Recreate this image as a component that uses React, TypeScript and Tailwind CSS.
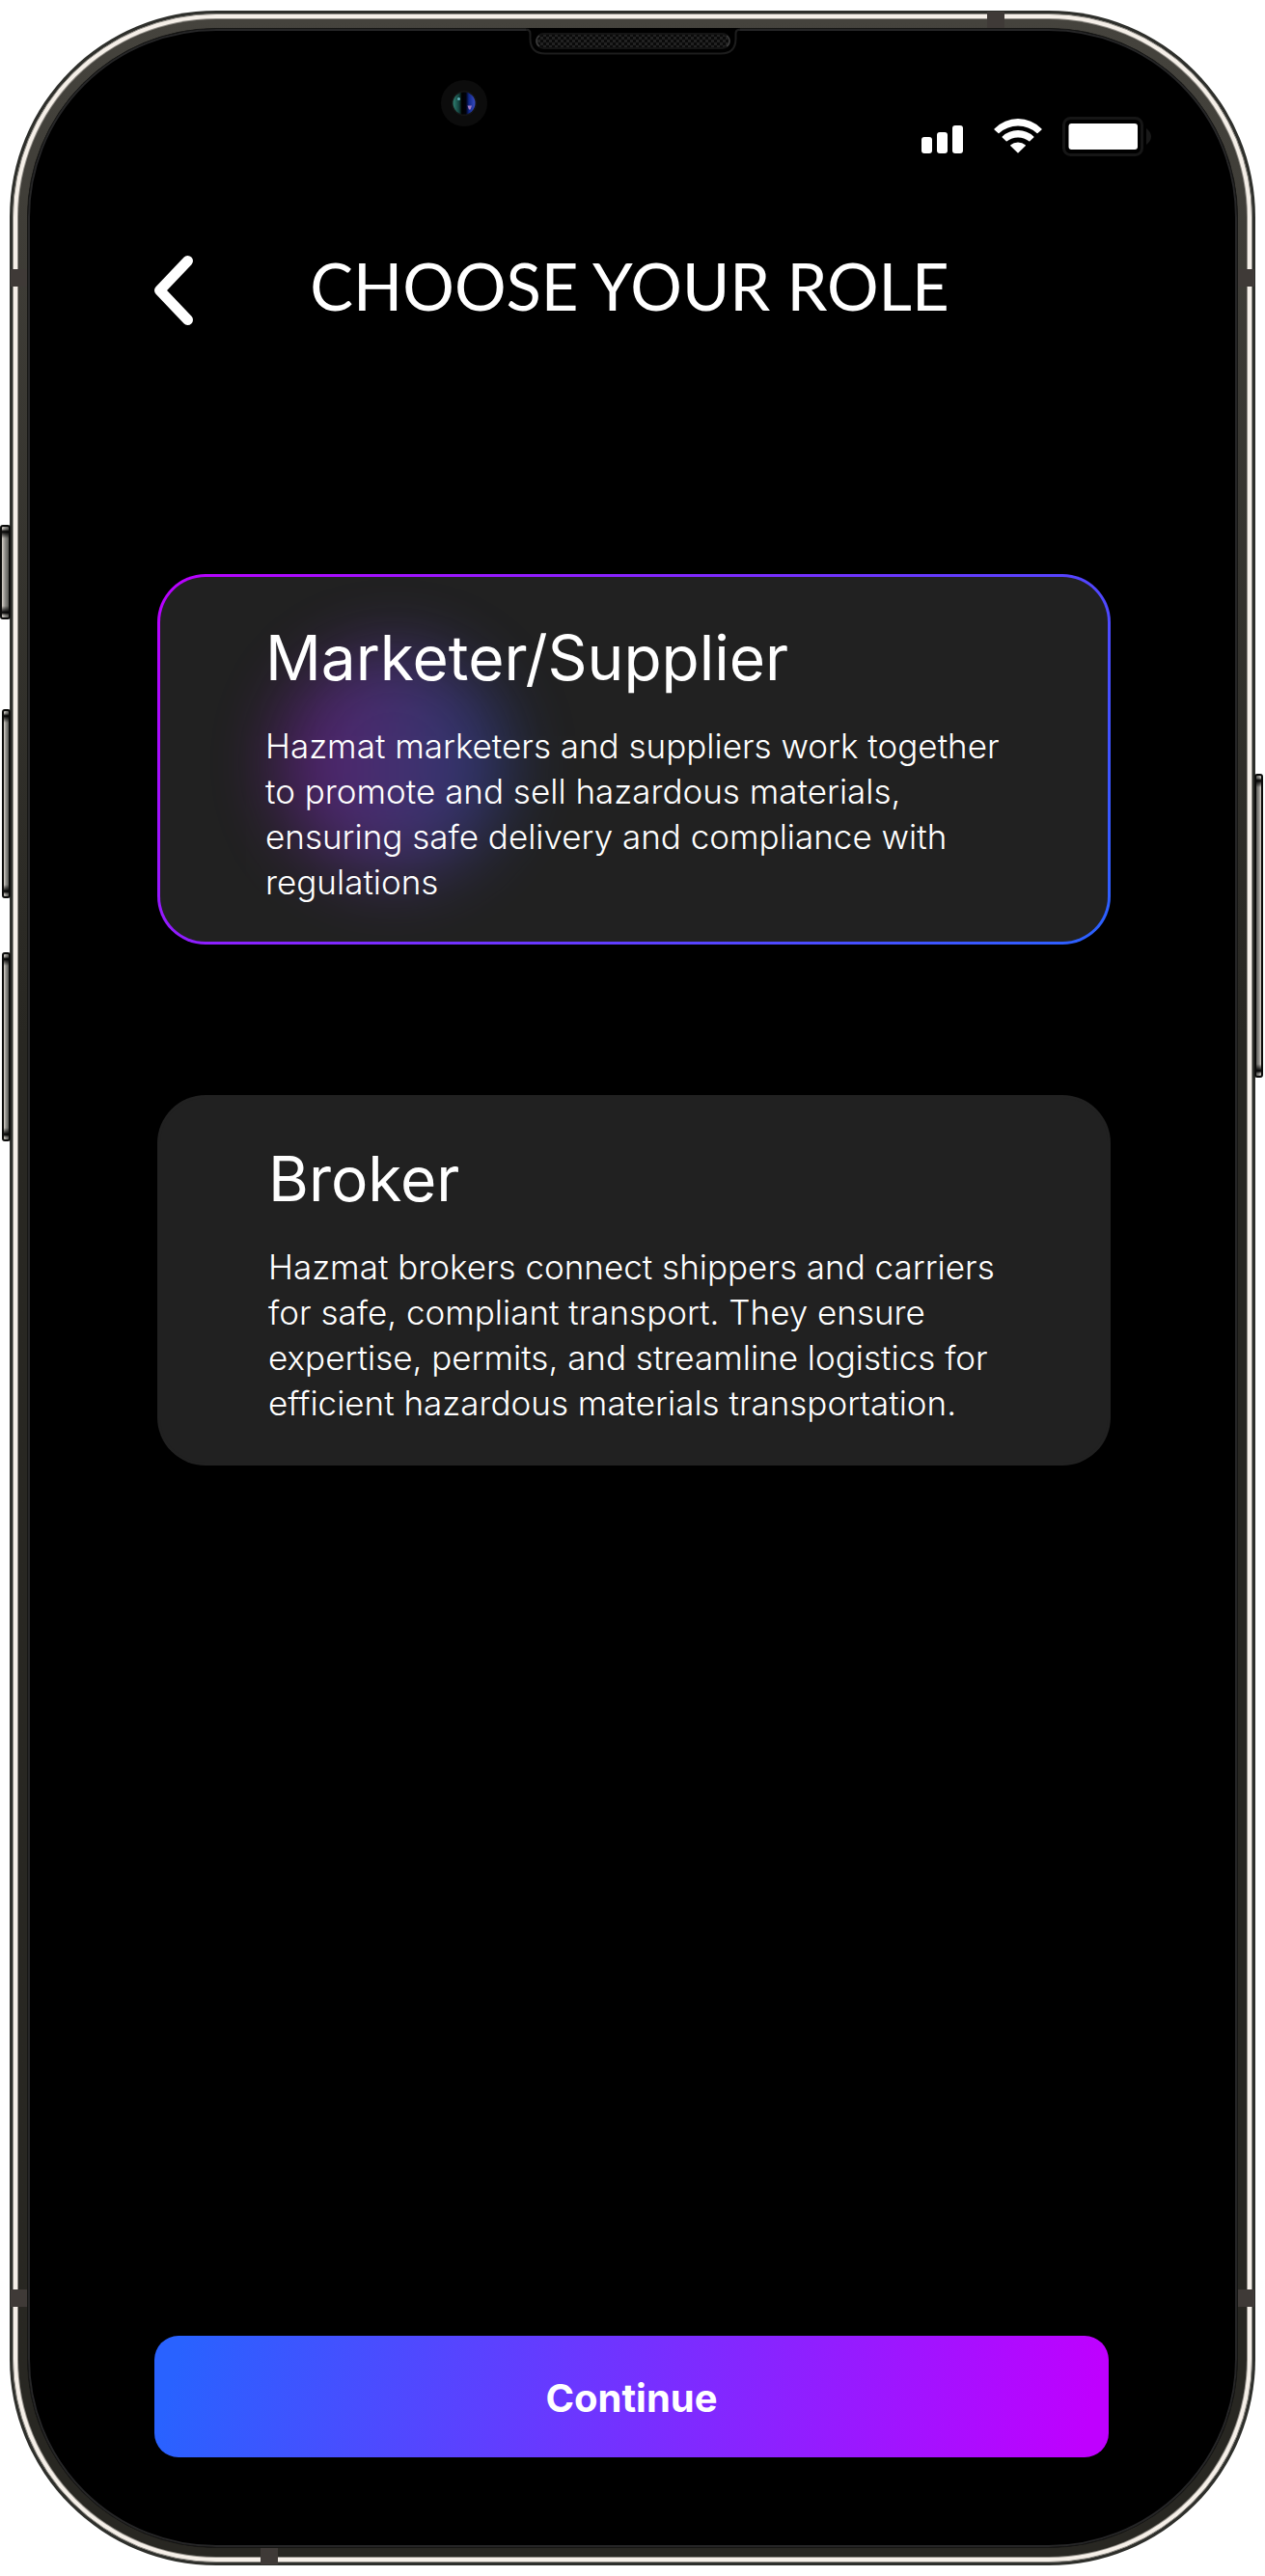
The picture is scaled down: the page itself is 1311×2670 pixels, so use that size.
import { useState } from "react";

type Role = {
  id: string;
  title: string;
  text: string;
  inset: string;
};

const roles: Role[] = [
  {
    id: "marketer",
    title: "Marketer/Supplier",
    text: "Hazmat marketers and suppliers work together to promote and sell hazardous materials, ensuring safe delivery and compliance with regulations",
    inset: "pl-[109px]",
  },
  {
    id: "broker",
    title: "Broker",
    text: "Hazmat brokers connect shippers and carriers for safe, compliant transport. They ensure expertise, permits, and streamline logistics for efficient hazardous materials transportation.",
    inset: "pl-[112px]",
  },
];

function SideButton({ place }: { place: string }) {
  return (
    <span
      aria-hidden="true"
      className={`absolute rounded-[3px] border-2 border-[#0b0b0a] bg-linear-to-r from-[#d6d0c9] via-[#8b8a86] to-[#5b5b57] ${place}`}
    >
      <span className="block h-full w-full bg-[linear-gradient(transparent_2px,#000_5px,transparent_12px,transparent_calc(100%-12px),#000_calc(100%-5px),transparent_calc(100%-2px))]" />
    </span>
  );
}

function AntennaBand({ place }: { place: string }) {
  return <span aria-hidden="true" className={`absolute bg-[#3f3a37] ${place}`} />;
}

function Earpiece() {
  return (
    <svg
      aria-hidden="true"
      viewBox="0 0 222 30"
      className="absolute top-[18px] left-1/2 h-[30px] w-[222px] -translate-x-1/2"
      fill="none"
    >
      <defs>
        <pattern id="mesh" width="6" height="6" patternUnits="userSpaceOnUse">
          <rect width="6" height="6" fill="#0a0a0a" />
          <rect x="0" y="0" width="3" height="3" fill="#222" />
          <rect x="3" y="3" width="3" height="3" fill="#222" />
        </pattern>
      </defs>
      <path
        d="M0 0H222V2Q218 2 218 6V11Q218 27 202 27H20Q4 27 4 11V6Q4 2 0 2Z"
        fill="#000"
      />
      <path
        d="M0 1.500Q4.500 1.500 4.500 6V11Q4.500 26.500 20 26.500H202Q217.500 26.500 217.500 11V6Q217.500 1.500 222 1.500"
        stroke="#1d1d1d"
        strokeWidth="2"
      />
      <rect x="11" y="6" width="200" height="15" rx="7.500" fill="url(#mesh)" stroke="#141414" strokeWidth="2" />
      <path d="M14 8Q11 10 11 13.500T14 19M208 8Q211 10 211 13.500T208 19" stroke="#3c3c3c" strokeWidth="1.500" />
    </svg>
  );
}

function FrontCamera() {
  return (
    <svg
      aria-hidden="true"
      viewBox="0 0 48 48"
      className="absolute top-[72px] left-1/2 h-12 w-12 -translate-x-[199px]"
    >
      <defs>
        <linearGradient id="lens" x1="0" x2="1">
          <stop offset="0" stopColor="#2f7f70" />
          <stop offset="0.280" stopColor="#123f3c" />
          <stop offset="0.400" stopColor="#000" />
          <stop offset="0.580" stopColor="#00020c" />
          <stop offset="0.720" stopColor="#10288a" />
          <stop offset="1" stopColor="#3a4cc0" />
        </linearGradient>
      </defs>
      <circle cx="24" cy="24" r="24" fill="#0c0c0c" />
      <circle cx="24" cy="24" r="13" fill="#151515" />
      <circle cx="24" cy="24" r="11.500" fill="url(#lens)" />
      <circle cx="18.500" cy="19.500" r="1.500" fill="#5fb0b8" />
      <path d="M27.500 26.500h4.500l-1.500 4h-1.500z" fill="#a37cc4" />
    </svg>
  );
}

function StatusBar() {
  return (
    <div className="flex h-[41px] items-start justify-end pr-[87px]">
      <svg role="img" aria-label="Signal" viewBox="0 0 44 41" className="mr-[31px] h-[41px] w-11" fill="#fff">
        <rect x="0" y="21" width="11" height="17" rx="3" />
        <rect x="16" y="16" width="11" height="22" rx="3" />
        <rect x="32" y="9" width="11" height="29" rx="3" />
      </svg>
      <svg role="img" aria-label="Wi-Fi" viewBox="0 0 50 41" className="mr-[21px] h-[41px] w-[50px]" fill="#fff">
        <path d="M0.500 12.500Q11 2 25 2T49.500 12.500Q50 13 49.500 13.500L45.500 17Q45 17.500 44.500 17Q36 9.500 25 9.500T5.500 17Q5 17.500 4.500 17L0.500 13.500Q0 13 0.500 12.500Z" />
        <path d="M8.700 20.500Q15.500 14 25 14T41.300 20.500Q41.800 21 41.300 21.500L37.300 25.300Q36.800 25.800 36.300 25.300Q31.500 21.500 25 21.500T13.700 25.300Q13.200 25.800 12.700 25.300L8.700 21.500Q8.200 21 8.700 20.500Z" />
        <path d="M17.300 29.300Q20.500 26.500 25 26.500T32.700 29.300Q33.200 29.800 32.700 30.300L25.500 37.300Q25 37.800 24.500 37.300L17.300 30.300Q16.800 29.800 17.300 29.300Z" />
      </svg>
      <svg role="img" aria-label="Battery full" viewBox="0 0 92 41" className="h-[41px] w-[92px]">
        <rect x="1.500" y="1.500" width="81" height="38" rx="7" fill="none" stroke="#161616" strokeWidth="3" />
        <rect x="6.500" y="7" width="71.500" height="27" rx="3" fill="#fff" />
        <path d="M87 12Q92 16 92 20.500T87 29Z" fill="#191919" />
      </svg>
    </div>
  );
}

function RoleCard({ role, checked, onPick }: { role: Role; checked: boolean; onPick: () => void }) {
  return (
    <label
      className={`relative block cursor-pointer rounded-[50px] p-[3px] ${
        checked ? "bg-[linear-gradient(135deg,#bb00ff,#2962ff)]" : "bg-[#212121]"
      }`}
    >
      <input
        type="radio"
        name="role"
        value={role.id}
        checked={checked}
        onChange={onPick}
        className="absolute size-px appearance-none opacity-0"
      />
      <span
        className={`relative block overflow-hidden rounded-[47px] bg-[#212121] pt-[46px] pr-[88px] pb-[38px] ${role.inset}`}
      >
        {checked && (
          <span
            aria-hidden="true"
            className="absolute top-[74px] left-[124px] size-[236px] rounded-full bg-linear-to-r from-[#bb00ff] to-[#2962ff] opacity-35 blur-[36px]"
          />
        )}
        <span role="heading" aria-level={2} className="relative block text-[64px] leading-[76px]">
          {role.title}
        </span>
        <span className="relative mt-[30px] block text-[35px] leading-[47px] font-light text-white">
          {role.text}
        </span>
      </span>
    </label>
  );
}

export default function App() {
  const [selected, setSelected] = useState("marketer");

  return (
    <div className="flex min-h-screen flex-col bg-white px-[10px] py-[11px] font-['Inter','Open_Sans',sans-serif] text-white">
      <div className="relative flex flex-1 flex-col rounded-[214px] bg-[#2e2f2b] p-[3px]">
        <SideButton place="top-[533px] -left-[10px] h-[98px] w-[11px]" />
        <SideButton place="top-[724px] -left-[8px] h-[196px] w-[9px]" />
        <SideButton place="top-[976px] -left-[8px] h-[196px] w-[9px]" />
        <SideButton place="top-[791px] -right-[8px] h-[315px] w-[9px] rotate-180" />

        <div className="flex flex-1 flex-col rounded-[211px] border border-[#8f8c86] bg-[#f5efe8] p-[4px]">
          <div className="flex flex-1 flex-col rounded-[206px] bg-[#8f8c86] p-px">
            <div className="flex flex-1 flex-col rounded-[205px] bg-linear-to-b from-[#45433d] via-[#282722] via-40% to-[#282722] p-[9px]">
              <div className="flex flex-1 flex-col rounded-[196px] border border-[#161614] bg-black">
                <main className="flex flex-1 flex-col rounded-[195px] border-2 border-[#262627] bg-black pt-[89px] pb-[91px]">
                  <StatusBar />

                  <header className="mt-[94px] flex items-center px-[129px]">
                    <button type="button" aria-label="Back" className="h-20 w-10 cursor-pointer">
                      <svg
                        viewBox="0 0 40 80"
                        className="h-20 w-10 overflow-visible"
                        fill="none"
                        stroke="#fff"
                        strokeWidth="11"
                      >
                        <path d="M34.500 14.500L5.500 45L34.500 75.500" strokeLinecap="round" strokeLinejoin="round" />
                      </svg>
                    </button>
                    <h1 className="flex-1 text-center font-['Lato',sans-serif] text-[67px] leading-[80px] whitespace-nowrap">
                      CHOOSE YOUR ROLE
                    </h1>
                    <span className="w-[46px]" />
                  </header>

                  <form
                    onSubmit={(e) => e.preventDefault()}
                    className="mt-[259px] flex flex-1 flex-col px-[129px]"
                  >
                    <fieldset aria-label="Role" className="flex flex-col gap-[156px] pl-[3px]">
                      {roles.map((role) => (
                        <RoleCard
                          key={role.id}
                          role={role}
                          checked={selected === role.id}
                          onPick={() => setSelected(role.id)}
                        />
                      ))}
                    </fieldset>
                    <button
                      type="submit"
                      className="mt-auto mr-[2px] h-[126px] cursor-pointer rounded-[25px] bg-[linear-gradient(105deg,#2962ff_3%,#bf00ff_97%)] pt-1 text-[40px] font-bold"
                    >
                      Continue
                    </button>
                  </form>
                </main>
              </div>
            </div>
          </div>
        </div>

        <AntennaBand place="top-[268px] left-px h-[18px] w-[17px]" />
        <AntennaBand place="top-[268px] right-px h-[18px] w-[17px]" />
        <AntennaBand place="bottom-[268px] left-px h-[18px] w-[17px]" />
        <AntennaBand place="right-px bottom-[268px] h-[18px] w-[17px]" />
        <AntennaBand place="top-px right-[260px] h-[17px] w-[18px]" />
        <AntennaBand place="bottom-px left-[260px] h-[17px] w-[18px]" />
        <Earpiece />
        <FrontCamera />
      </div>
    </div>
  );
}
